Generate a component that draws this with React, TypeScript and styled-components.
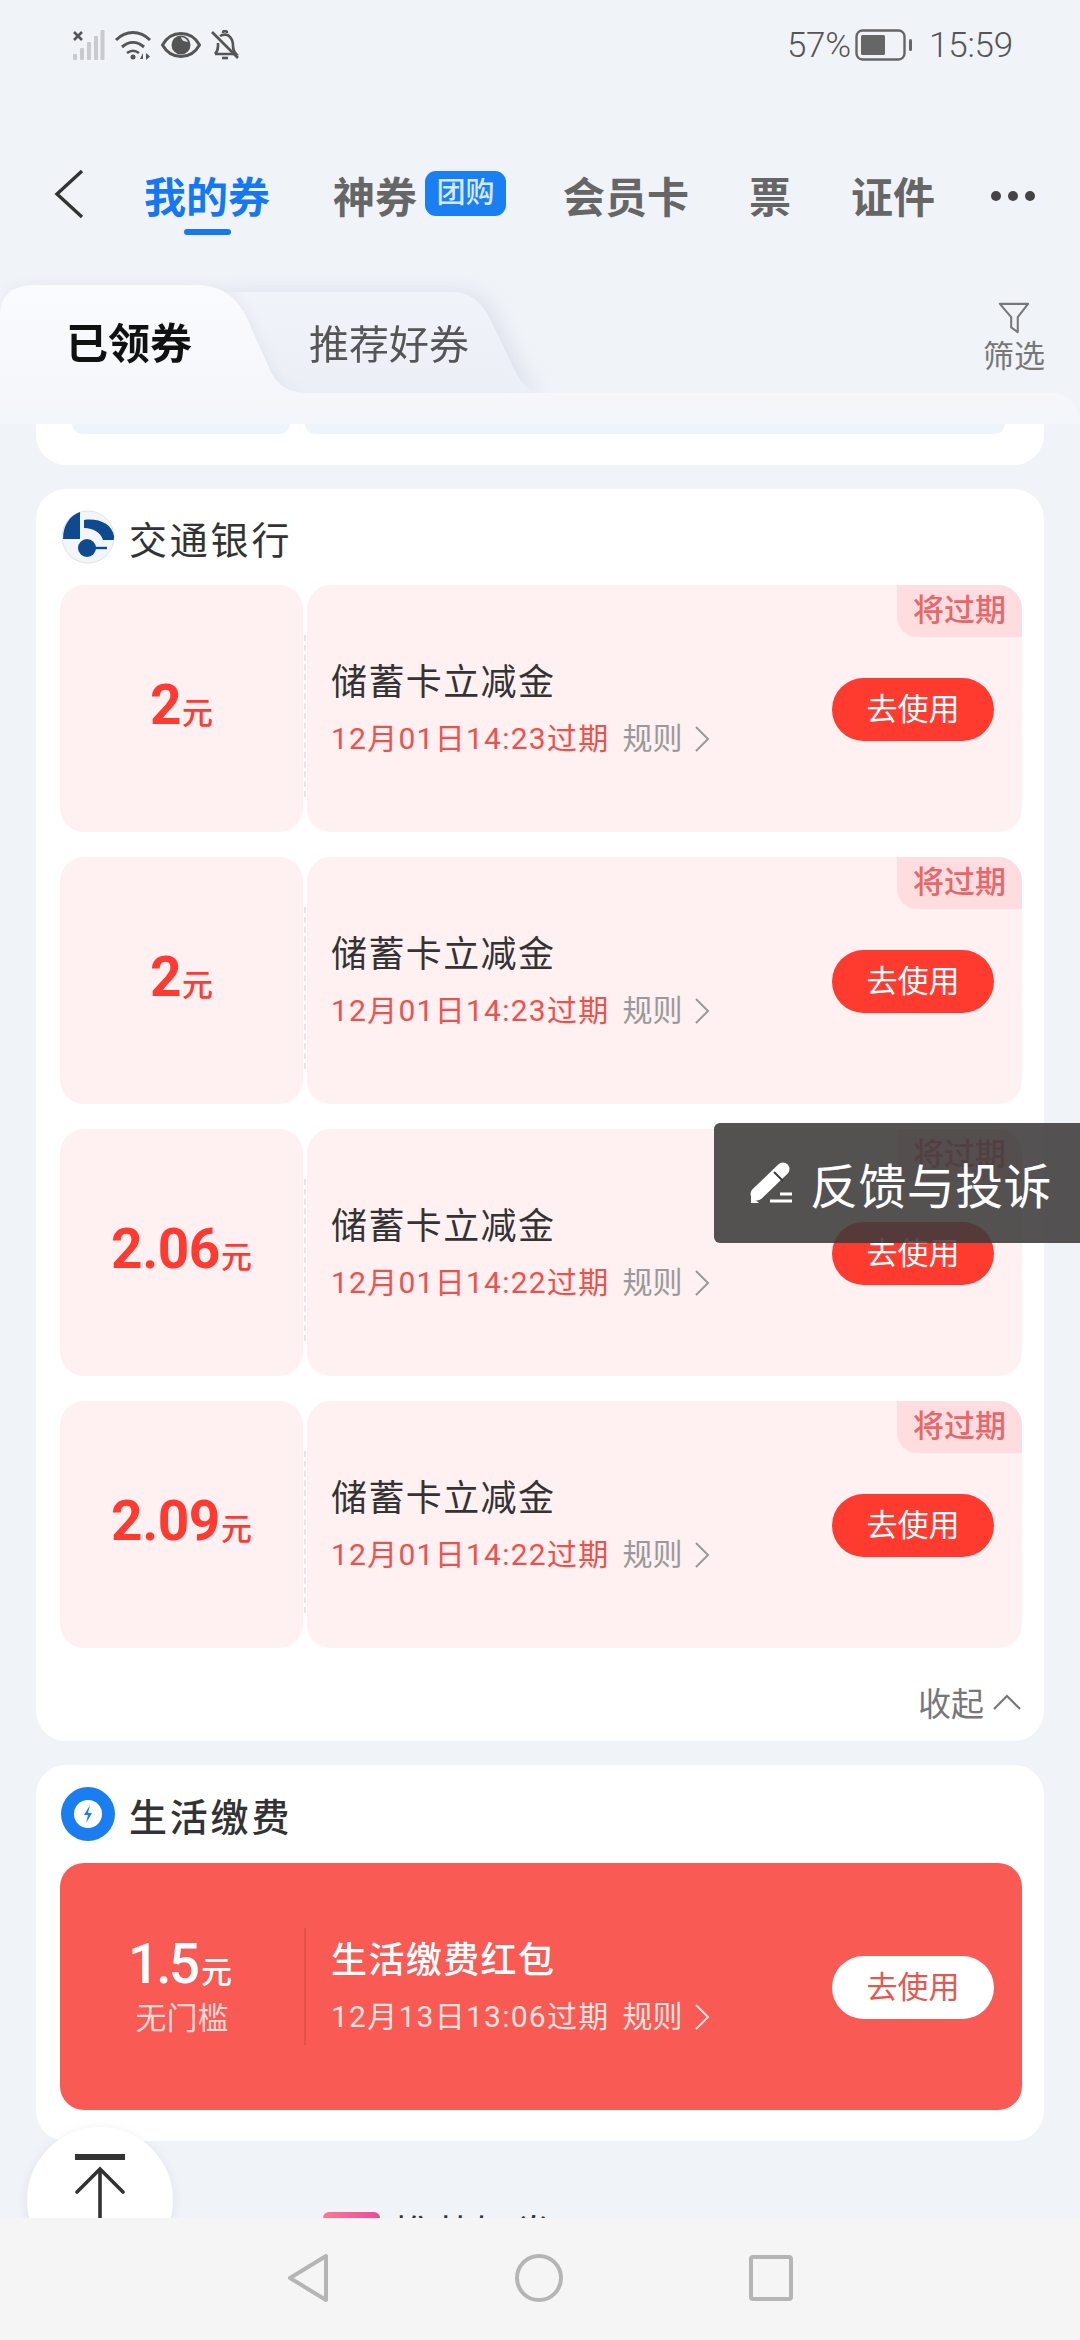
import React from "react";
import styled, { createGlobalStyle } from "styled-components";

const GlobalStyle = createGlobalStyle`
  html, body { margin: 0; padding: 0; background: #f0f3f8; }
  * { box-sizing: border-box; }
  body { font-family: Roboto, "Noto Sans CJK SC", sans-serif; }
`;

const Page = styled.div`
  position: relative;
  width: 1080px;
  height: 2340px;
  overflow: hidden;
  background: #f0f3f8;
  display: flex;
  flex-direction: column;
`;

const StatusBar = styled.div`
  height: 60px;
  margin-top: 15px;
  padding: 0 67px 0 72px;
  display: flex;
  align-items: center;
  justify-content: space-between;
  color: #555;
`;

const StatusIcons = styled.div`
  display: flex;
  align-items: center;
  gap: 9px;
`;

const StatusRight = styled.div`
  display: flex;
  align-items: center;
  font-size: 35px;
  font-weight: 300;
  letter-spacing: -0.2px;
`;

const Nav = styled.div`
  margin-top: 60px;
  height: 120px;
  padding: 8px 0 0 54px;
  display: flex;
  align-items: center;
  gap: 60px;
`;

const BackIcon = styled.svg`
  width: 30px;
  height: 50px;
  margin-top: -10px;
`;

const NavItem = styled.div<{ $active?: boolean }>`
  position: relative;
  display: flex;
  align-items: center;
  gap: 8px;
  font-size: 42px;
  font-weight: 700;
  line-height: 50px;
  margin-right: ${(p) => (p.$active ? 3 : 0)}px;
  color: ${(p) => (p.$active ? "#1677f5" : "#666")};

  ${(p) =>
    p.$active &&
    `&::after {
      content: "";
      position: absolute;
      left: 40px;
      bottom: -11px;
      width: 47px;
      height: 6px;
      border-radius: 3px;
      background: #1677f5;
    }`}
`;

const NavBadge = styled.span`
  width: 81px;
  height: 45px;
  margin-top: -12px;
  margin-right: -3px;
  border-radius: 11px;
  background: #1a7ff2;
  color: #d6e9ff;
  font-size: 29px;
  font-weight: 500;
  line-height: 45px;
  text-align: center;
`;

const MoreDots = styled.div`
  display: flex;
  gap: 7px;
  margin-left: -4px;
  margin-top: -6px;

  i {
    width: 10px;
    height: 10px;
    border-radius: 50%;
    background: #444;
  }
`;

const TabRow = styled.div`
  margin-top: 30px;
  height: 108px;
  display: flex;
  position: relative;
`;

const ActiveTabWrap = styled.div`
  position: relative;
  z-index: 2;
  width: 310px;
  filter: drop-shadow(2px 0 6px rgba(190, 198, 215, 0.25));
`;

const ActiveTab = styled.div`
  height: 108px;
  padding: 32px 0 0 66px;
  background: linear-gradient(#fafbfd, #f5f7fb);
  clip-path: path("M0 108 V32 Q0 0 34 0 H195 C225 0 240 15 250 40 L270 85 C278 102 290 108 310 108 Z");
  color: #111;
  font-size: 42px;
  font-weight: 700;
  line-height: 56px;
`;

const IdleTabWrap = styled.div`
  position: relative;
  z-index: 1;
  width: 312px;
  margin-left: -85px;
  filter: drop-shadow(6px 0 10px rgba(180, 188, 208, 0.35));
`;

const IdleTab = styled.div`
  height: 108px;
  padding: 33px 0 0 84px;
  background: linear-gradient(#f1f4f9, #ebeff6);
  clip-path: path("M0 108 V7 H228 C245 7 258 18 266 36 L285 75 C292 92 300 104 312 108 Z");
  color: #555;
  font-size: 40px;
  line-height: 56px;
`;

const FilterBox = styled.div`
  margin-left: auto;
  width: 64px;
  margin-right: 34px;
  padding-top: 17px;
  display: flex;
  flex-direction: column;
  align-items: center;
  gap: 5px;
  color: #777;
  font-size: 31px;
  line-height: 36px;
`;

const Lip = styled.div`
  height: 31px;
  position: relative;
  z-index: 3;
  border-radius: 0 28px 0 0;
  background: linear-gradient(#f5f7fb, #f2f5f9);
`;

const Scroller = styled.div`
  height: 1794px;
  overflow: hidden;
  padding: 0 36px;
  display: flex;
  flex-direction: column;
  gap: 24px;
`;

const ClippedCard = styled.div`
  flex: none;
  height: 41px;
  padding: 0 39px 0 36px;
  display: flex;
  gap: 15px;
  background: #fff;
  border-radius: 0 0 30px 30px;
`;

const ClippedBox = styled.div<{ $w: number }>`
  flex: ${(p) => (p.$w ? `0 0 ${p.$w}px` : "1")};
  height: 10px;
  background: #edf4fb;
  border-radius: 0 0 18px 18px;
`;

const Card = styled.div`
  flex: none;
  padding: 0 22px 0 24px;
  background: #fff;
  border-radius: 30px;
`;

const CardHeader = styled.div<{ $h: number }>`
  height: ${(p) => p.$h}px;
  display: flex;
  align-items: center;
  gap: 14px;
  font-size: 38px;
  color: #333;
`;

const HeaderTitle = styled.span<{ $strong?: boolean }>`
  font-weight: ${(p) => (p.$strong ? 500 : 400)};
  letter-spacing: 2.8px;
`;

const LogoSvg = styled.svg`
  width: 54px;
  height: 54px;
  flex: none;
  margin-left: 1px;
`;

const CouponList = styled.div`
  display: flex;
  flex-direction: column;
  gap: 25px;
`;

const Coupon = styled.div`
  position: relative;
  height: 247px;
  display: flex;
  gap: 4px;
`;

const Stub = styled.div`
  position: relative;
  flex: 0 0 243px;
  display: flex;
  align-items: center;
  justify-content: center;
  padding-top: 1px;
  background: #fff0f2;
  border-radius: 24px;

  &::after {
    content: "";
    position: absolute;
    right: -3px;
    top: 50px;
    bottom: 35px;
    border-right: 2px dashed #f6dfe2;
  }
`;

const Amount = styled.div<{ $light?: boolean }>`
  display: flex;
  align-items: baseline;
  color: ${(p) => (p.$light ? "#fff" : "#ff3a30")};
  font-size: 55px;
  font-weight: ${(p) => (p.$light ? 500 : 700)};
  letter-spacing: ${(p) => (p.$light ? -3 : -0.4)}px;
  line-height: 60px;
  margin-left: ${(p) => (p.$light ? -4 : 0)}px;

  small {
    font-size: 31px;
    font-weight: 500;
    letter-spacing: 0;
    margin-left: ${(p) => (p.$light ? 4 : 1)}px;
  }
`;

const Body = styled.div`
  flex: 1;
  display: flex;
  align-items: center;
  justify-content: space-between;
  padding: 2px 28px 0 24px;
  background: #fff0f2;
  border-radius: 24px;
`;

const TextCol = styled.div`
  display: flex;
  flex-direction: column;
  gap: 13px;
`;

const CouponTitle = styled.div<{ $light?: boolean }>`
  font-size: 36px;
  line-height: 46px;
  letter-spacing: 1.4px;
  font-weight: ${(p) => (p.$light ? 500 : 400)};
  color: ${(p) => (p.$light ? "#fff" : "#333")};
`;

const MetaRow = styled.div`
  display: flex;
  align-items: center;
  font-size: 30px;
  line-height: 40px;
`;

const Expiry = styled.span<{ $light?: boolean }>`
  color: ${(p) => (p.$light ? "#fde3df" : "#f0504a")};
  letter-spacing: 1.25px;
`;

const Rule = styled.span<{ $light?: boolean }>`
  display: flex;
  align-items: center;
  gap: 12px;
  margin-left: 13px;
  color: ${(p) => (p.$light ? "#fde3df" : "#999")};
`;

const UseButton = styled.div<{ $light?: boolean }>`
  width: 162px;
  height: 63px;
  border-radius: 32px;
  background: ${(p) => (p.$light ? "#fff" : "#ff3a2e")};
  color: ${(p) => (p.$light ? "#e8574f" : "#fff")};
  font-size: 31px;
  line-height: 63px;
  text-align: center;
`;

const ExpireTag = styled.div`
  position: absolute;
  right: 0;
  top: 0;
  width: 125px;
  height: 52px;
  border-radius: 0 24px 0 20px;
  background: #fddde0;
  color: #e8686a;
  font-size: 31px;
  font-weight: 500;
  line-height: 52px;
  text-align: center;
`;

const CollapseRow = styled.div`
  height: 93px;
  padding-top: 14px;
  display: flex;
  align-items: center;
  justify-content: flex-end;
  gap: 8px;
  font-size: 33px;
  color: #777;
`;

const RedCoupon = styled.div`
  height: 247px;
  margin-bottom: 31px;
  display: flex;
  align-items: center;
  background: #f95a54;
  border-radius: 24px;
`;

const RedStub = styled.div`
  flex: 0 0 246px;
  height: 117px;
  display: flex;
  flex-direction: column;
  align-items: center;
  justify-content: center;
  border-right: 2px solid #e5504a;
`;

const NoLimit = styled.div`
  font-size: 31px;
  line-height: 40px;
  margin-top: -4px;
  color: #fdd9d5;
`;

const RedBody = styled(Body)`
  background: transparent;
  padding-left: 25px;
`;

const PromoHead = styled.div`
  flex: none;
  margin-top: 47px;
  padding-left: 287px;
  display: flex;
  gap: 13px;
  font-size: 40px;
  line-height: 48px;
  color: #333;
`;

const PromoMark = styled.span`
  width: 57px;
  height: 40px;
  border-radius: 6px 6px 0 0;
  background: linear-gradient(90deg, #fb7a92, #f0489a);
`;

const PromoNote = styled.span`
  margin-left: 14px;
  font-size: 30px;
  color: #aaa;
`;

const BottomNav = styled.div`
  position: relative;
  z-index: 5;
  height: 122px;
  padding-bottom: 3px;
  display: flex;
  align-items: center;
  justify-content: center;
  gap: 186px;
  background: #f5f5f5;
`;

const ToastBox = styled.div`
  position: absolute;
  z-index: 6;
  left: 714px;
  top: 1123px;
  width: 366px;
  height: 120px;
  padding-left: 36px;
  border-radius: 6px 0 0 6px;
  display: flex;
  align-items: center;
  gap: 16px;
  background: rgba(60, 58, 58, 0.88);
  color: #fff;
  font-size: 48px;
  letter-spacing: 0.4px;
`;

const TopButton = styled.div`
  position: absolute;
  z-index: 4;
  left: 27px;
  top: 2127px;
  width: 146px;
  height: 146px;
  border-radius: 50%;
  display: flex;
  justify-content: center;
  padding-top: 27px;
  background: #fff;
  box-shadow: 0 2px 10px rgba(190, 198, 215, 0.35);
`;

const SignalIcon = () => (
  <svg width="33" height="30" viewBox="0 0 33 30">
    <path d="M2 2l8 8M10 2l-8 8" stroke="#555" strokeWidth="2.6" />
    <g fill="#c8cacd">
      <rect x="1" y="24" width="4" height="6" rx="1" />
      <rect x="8" y="18" width="4" height="12" rx="1" />
      <rect x="15" y="12" width="4" height="18" rx="1" />
      <rect x="22" y="6" width="4" height="24" rx="1" />
      <rect x="28.5" y="0" width="4" height="30" rx="1" />
    </g>
  </svg>
);

const WifiIcon = () => (
  <svg width="38" height="30" viewBox="0 0 38 30" fill="none" stroke="#555" strokeWidth="3">
    <path d="M2 10c10-10 24-10 34 0" />
    <path d="M8 17c7-6 15-6 22 0" />
    <path d="M13 23c4-3 8-3 12 0" strokeWidth="2.6" />
    <circle cx="19" cy="27" r="2.5" fill="#555" stroke="none" />
    <path d="M26 29l3-6v6zM32 23v7l4-3.5" fill="#555" stroke="none" />
  </svg>
);

const EyeIcon = () => (
  <svg width="40" height="26" viewBox="0 0 40 26">
    <path d="M1.5 13C6 5 12 1.5 20 1.5S34 5 38.5 13C34 21 28 24.5 20 24.5S6 21 1.5 13z" fill="none" stroke="#555" strokeWidth="3" />
    <circle cx="20" cy="13" r="9.5" fill="#555" />
    <path d="M20 5a8 8 0 0 1 7 5c-3-1-6 0-7-5z" fill="#fff" opacity="0.85" />
  </svg>
);

const BellOffIcon = () => (
  <svg width="30" height="30" viewBox="0 0 30 30" fill="none" stroke="#555" strokeWidth="2.6">
    <path d="M5 24c2-2 3-4 3-8v-3M10 6c3-2 8-2 10 1 3 3 3 6 3 9 0 4 1 6 3 8H5" />
    <path d="M17 3a2 2 0 0 0-4 0" />
    <path d="M12 28h6" />
    <path d="M2 2l26 26" />
  </svg>
);

const BatteryIcon = () => (
  <svg width="58" height="32" viewBox="0 0 58 32" style={{ margin: "0 16px 0 4px" }}>
    <rect x="1.5" y="1.5" width="48" height="29" rx="6" fill="none" stroke="#666" strokeWidth="2.4" />
    <rect x="6" y="6" width="24" height="20" rx="1.5" fill="#666" />
    <rect x="54" y="10" width="3" height="12" rx="1.5" fill="#666" />
  </svg>
);

const RuleChevron = ({ color }: { color: string }) => (
  <svg width="16" height="26" viewBox="0 0 16 26" fill="none" stroke={color} strokeWidth="2">
    <path d="M2 1l12 12L2 25" />
  </svg>
);

const BankLogo = () => (
  <LogoSvg viewBox="0 0 54 54">
    <circle cx="27" cy="27" r="26" fill="#f4f5f8" stroke="#e4e2e2" strokeWidth="1" />
    <path d="M19 2v27H2C2 16 8 6 19 2z" fill="#0d4a8f" />
    <path d="M23 10c15-2 28 4 30 16 .2 2 0 3-.5 4H42c-2-7-9-12-19-12z" fill="#0d4a8f" />
    <circle cx="26" cy="38" r="9" fill="#0d4a8f" />
    <rect x="30" y="36.8" width="16" height="2.4" fill="#0d4a8f" />
  </LogoSvg>
);

const BoltLogo = () => (
  <LogoSvg viewBox="0 0 54 54">
    <circle cx="27" cy="27" r="27" fill="#1a7df0" />
    <circle cx="27" cy="27" r="14" fill="#fff" />
    <path d="M29 18l-6 10h4l-2 8 6-10h-4z" fill="#1a7df0" />
  </LogoSvg>
);

const bankCoupons = [
  { amount: "2", expiry: "12月01日14:23过期" },
  { amount: "2", expiry: "12月01日14:23过期" },
  { amount: "2.06", expiry: "12月01日14:22过期" },
  { amount: "2.09", expiry: "12月01日14:22过期" },
];

const App: React.FC = () => {
  return (
    <Page>
      <GlobalStyle />
      <StatusBar>
        <StatusIcons>
          <SignalIcon />
          <WifiIcon />
          <EyeIcon />
          <BellOffIcon />
        </StatusIcons>
        <StatusRight>
          57%
          <BatteryIcon />
          15:59
        </StatusRight>
      </StatusBar>

      <Nav>
        <BackIcon viewBox="0 0 30 50" fill="none" stroke="#333" strokeWidth="3.4">
          <path d="M28 2L3 25l25 23" />
        </BackIcon>
        <NavItem $active>我的券</NavItem>
        <NavItem>
          神券
          <NavBadge>团购</NavBadge>
        </NavItem>
        <NavItem>会员卡</NavItem>
        <NavItem>票</NavItem>
        <NavItem>证件</NavItem>
        <MoreDots>
          <i />
          <i />
          <i />
        </MoreDots>
      </Nav>

      <TabRow>
        <ActiveTabWrap>
          <ActiveTab>已领券</ActiveTab>
        </ActiveTabWrap>
        <IdleTabWrap>
          <IdleTab>推荐好券</IdleTab>
        </IdleTabWrap>
        <FilterBox>
          <svg width="32" height="32" viewBox="0 0 34 34" fill="none" stroke="#777" strokeWidth="2.2">
            <path d="M2 2h30L21 16v16l-7-5V16z" strokeLinejoin="round" />
          </svg>
          筛选
        </FilterBox>
      </TabRow>
      <Lip />

      <Scroller>
        <ClippedCard>
          <ClippedBox $w={218} />
          <ClippedBox $w={0} />
        </ClippedCard>

        <Card>
          <CardHeader $h={96}>
            <BankLogo />
            <HeaderTitle>交通银行</HeaderTitle>
          </CardHeader>
          <CouponList>
            {bankCoupons.map((c, i) => (
              <Coupon key={i}>
                <Stub>
                  <Amount>
                    {c.amount}
                    <small>元</small>
                  </Amount>
                </Stub>
                <Body>
                  <TextCol>
                    <CouponTitle>储蓄卡立减金</CouponTitle>
                    <MetaRow>
                      <Expiry>{c.expiry}</Expiry>
                      <Rule>
                        规则
                        <RuleChevron color="#999" />
                      </Rule>
                    </MetaRow>
                  </TextCol>
                  <UseButton>去使用</UseButton>
                </Body>
                <ExpireTag>将过期</ExpireTag>
              </Coupon>
            ))}
          </CouponList>
          <CollapseRow>
            收起
            <svg width="30" height="18" viewBox="0 0 30 18" fill="none" stroke="#777" strokeWidth="2.2">
              <path d="M2 16L15 3l13 13" />
            </svg>
          </CollapseRow>
        </Card>

        <Card>
          <CardHeader $h={98}>
            <BoltLogo />
            <HeaderTitle $strong>生活缴费</HeaderTitle>
          </CardHeader>
          <RedCoupon>
            <RedStub>
              <Amount $light>
                1.5
                <small>元</small>
              </Amount>
              <NoLimit>无门槛</NoLimit>
            </RedStub>
            <RedBody>
              <TextCol>
                <CouponTitle $light>生活缴费红包</CouponTitle>
                <MetaRow>
                  <Expiry $light>12月13日13:06过期</Expiry>
                  <Rule $light>
                    规则
                    <RuleChevron color="#fde3df" />
                  </Rule>
                </MetaRow>
              </TextCol>
              <UseButton $light>去使用</UseButton>
            </RedBody>
          </RedCoupon>
        </Card>

        <PromoHead>
          <PromoMark />
          推荐好券
          <PromoNote>为你精选更多好券</PromoNote>
        </PromoHead>
      </Scroller>

      <BottomNav>
        <svg width="42" height="50" viewBox="0 0 42 50" fill="none" stroke="#b5b5b5" strokeWidth="4" strokeLinejoin="round">
          <path d="M39 3v44L3 25z" />
        </svg>
        <svg width="48" height="48" viewBox="0 0 48 48" fill="none" stroke="#b5b5b5" strokeWidth="4">
          <circle cx="24" cy="24" r="22" />
        </svg>
        <svg width="44" height="46" viewBox="0 0 44 46" fill="none" stroke="#b5b5b5" strokeWidth="4" strokeLinejoin="round">
          <rect x="2" y="2" width="40" height="42" rx="2" />
        </svg>
      </BottomNav>

      <ToastBox>
        <svg width="44" height="42" viewBox="0 0 44 42" fill="none">
          <path d="M7 32L33 7" stroke="#fff" strokeWidth="13" strokeLinecap="round" />
          <path d="M24 10l9 9" stroke="#3c3a3a" strokeWidth="2" />
          <path d="M1 34l8 7H1z" fill="#fff" />
          <path d="M20 39h22M30 32h12" stroke="#fff" strokeWidth="3" />
        </svg>
        反馈与投诉
      </ToastBox>

      <TopButton>
        <svg width="50" height="66" viewBox="0 0 50 66" fill="none" stroke="#333" strokeWidth="3.6">
          <path d="M0 3h50" strokeWidth="6" />
          <path d="M25 16v50" />
          <path d="M2 38L25 15l23 23" strokeLinecap="round" />
        </svg>
      </TopButton>
    </Page>
  );
};

export default App;
